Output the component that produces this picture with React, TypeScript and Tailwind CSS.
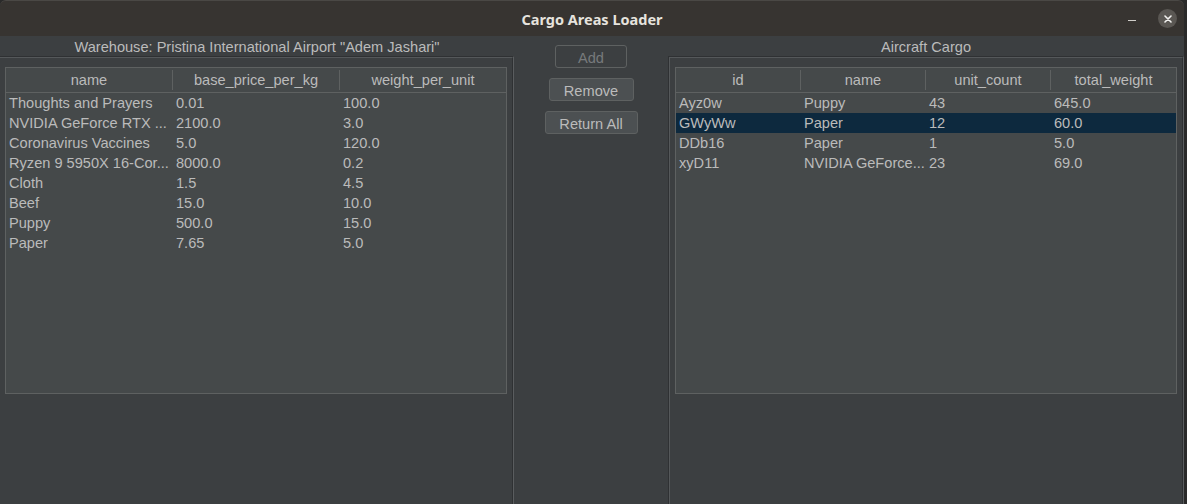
import React from 'react';

type Column = { title: string; width: number };

const warehouseColumns: Column[] = [
  { title: 'name', width: 167 },
  { title: 'base_price_per_kg', width: 167 },
  { title: 'weight_per_unit', width: 166 },
];

const warehouseRows = [
  ['Thoughts and Prayers', '0.01', '100.0'],
  ['NVIDIA GeForce RTX ...', '2100.0', '3.0'],
  ['Coronavirus Vaccines', '5.0', '120.0'],
  ['Ryzen 9 5950X 16-Cor...', '8000.0', '0.2'],
  ['Cloth', '1.5', '4.5'],
  ['Beef', '15.0', '10.0'],
  ['Puppy', '500.0', '15.0'],
  ['Paper', '7.65', '5.0'],
];

const cargoColumns: Column[] = [
  { title: 'id', width: 125 },
  { title: 'name', width: 125 },
  { title: 'unit_count', width: 125 },
  { title: 'total_weight', width: 125 },
];

const cargoRows = [
  ['Ayz0w', 'Puppy', '43', '645.0'],
  ['GWyWw', 'Paper', '12', '60.0'],
  ['DDb16', 'Paper', '1', '5.0'],
  ['xyD11', 'NVIDIA GeForce...', '23', '69.0'],
];

function DataTable({
  columns,
  rows,
  selected,
}: {
  columns: Column[];
  rows: string[][];
  selected?: number;
}) {
  return (
    <div className="h-[327px] border border-[#5e6161] bg-[#45494a]">
      {/* header */}
      <div className="flex h-[25px] border-b border-[#5e6161]">
        {columns.map((c, i) => (
          <div
            key={c.title}
            style={{ width: c.width }}
            className={
              i < columns.length - 1
                ? 'flex items-center justify-center border-r border-[#5e6161] my-[2px] pt-[2px]'
                : 'flex items-center justify-center my-[2px] pt-[2px]'
            }
          >
            {c.title}
          </div>
        ))}
      </div>
      {rows.map((r, ri) => (
        <div
          key={ri}
          className={ri === selected ? 'flex h-[20px] bg-[#0d293e]' : 'flex h-[20px]'}
        >
          {r.map((cell, ci) => (
            <div
              key={ci}
              style={{ width: columns[ci].width }}
              className="flex items-center pl-[3px] pt-[2px] whitespace-nowrap overflow-hidden"
            >
              {cell}
            </div>
          ))}
        </div>
      ))}
    </div>
  );
}

export default function App() {
  return (
    <div className="flex h-[504px] w-[1187px] flex-col overflow-hidden bg-[#2a2a2a] text-[14.6px] text-[#bbbbbb] font-['Liberation_Sans',Arial,sans-serif]">
      {/* Title bar */}
      <div className="relative flex h-[36px] shrink-0 items-center justify-center rounded-t-[6px] border-t border-[#4a4845] bg-[#373431] mr-[3px]">
        <div className="pt-[2px] font-['Noto_Sans',sans-serif] text-[14.5px] font-bold text-[#e6e3de]">
          Cargo Areas Loader
        </div>
        <div className="absolute right-[7px] top-[8px] flex items-center gap-[22px]">
          <div className="mt-[3px] h-[1px] w-[8px] bg-[#d0ceca]" />
          <div className="flex h-[19px] w-[19px] items-center justify-center rounded-full bg-[#5a5753]">
            <svg width="8" height="8" viewBox="0 0 8 8">
              <path d="M1 1L7 7M7 1L1 7" stroke="#f2f1ef" strokeWidth="1.6" strokeLinecap="round" />
            </svg>
          </div>
        </div>
      </div>

      {/* Body */}
      <div className="flex flex-1 bg-[#3c3f41] mr-[3px]">
        {/* Warehouse panel */}
        <div className="flex w-[514px] flex-col">
          <div className="flex h-[20px] items-center justify-center pt-[3px]">
            Warehouse: Pristina International Airport "Adem Jashari"
          </div>
          <div className="flex-1 border-t border-r border-t-[#2f3133] border-r-[#5a5d5f]">
            <div className="h-full border-t border-r border-t-[#55585a] border-r-[#2f3133] pl-[5px] pr-[5px] pt-[9px]">
              <DataTable columns={warehouseColumns} rows={warehouseRows} />
            </div>
          </div>
        </div>

        {/* Buttons */}
        <div className="flex w-[154px] flex-col items-center gap-[10px] pt-[9px]">
          <button className="h-[23px] w-[72px] rounded-[3px] border border-[#5e6161] pt-[2px] text-[#777a7c]">
            Add
          </button>
          <button className="h-[23px] w-[85px] rounded-[3px] border border-[#5e6161] bg-[#4c5052] pt-[2px]">
            Remove
          </button>
          <button className="h-[23px] w-[93px] rounded-[3px] border border-[#5e6161] bg-[#4c5052] pt-[2px]">
            Return All
          </button>
        </div>

        {/* Cargo panel */}
        <div className="flex flex-1 flex-col">
          <div className="flex h-[20px] items-center justify-center pt-[3px]">Aircraft Cargo</div>
          <div className="flex-1 border-t border-l border-r border-t-[#2f3133] border-l-[#2f3133] border-r-[#5a5d5f]">
            <div className="h-full border-t border-l border-r border-t-[#55585a] border-l-[#55585a] border-r-[#2f3133] pl-[5px] pr-[5px] pt-[9px]">
              <DataTable columns={cargoColumns} rows={cargoRows} selected={1} />
            </div>
          </div>
        </div>
      </div>
    </div>
  );
}
